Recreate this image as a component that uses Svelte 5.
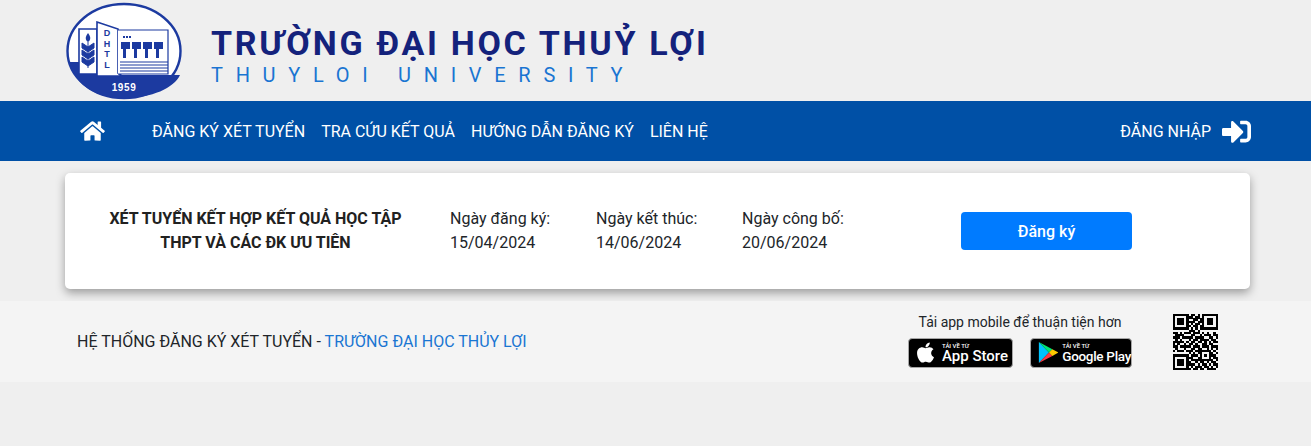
<script lang="ts">
  const qr = [
    "1111111 0 1 1 0 1 0 1111111",
    "1000001 1 1 0 1 1 0 1000001",
    "1011101 0 0 1 1 0 1 1011101",
    "1011101 1 1 1 0 1 1 1011101",
    "1011101 0 1 0 1 1 0 1011101",
    "1000001 1 0 1 1 0 1 1000001",
    "1111111 0 1 0 1 0 1 1111111",
    "0000000 1 1 1 0 1 0 0000000",
    "1101011 1 0 1 1 1 0 1010010",
    "0111100 0 1 1 0 0 1 0111011",
    "1110111 1 1 0 1 1 1 1001101",
    "0101000 1 0 1 1 0 1 1110110",
    "1111101 0 1 1 0 1 1 0101011",
    "1010010 1 1 0 1 0 0 1101100",
    "1101111 1 0 1 1 1 0 1110111",
    "0100010 0 1 1 0 1 1 0010101",
    "1011101 1 1 0 1 1 1 1111010",
    "0000000 1 0 1 0 1 1 0001101",
    "1111111 0 1 1 1 0 1 0101110",
    "1000001 1 1 0 0 1 1 0001011",
    "1011101 0 1 1 1 1 1 1111101",
    "1011101 1 0 0 1 0 1 1010110",
    "1011101 1 1 1 0 1 0 1101011",
    "1000001 0 1 0 1 1 1 0110101",
    "1111111 1 0 1 1 0 1 1011110"
  ].map((r) => r.replaceAll(" ", ""));
  const cells = qr.flatMap((row, y) =>
    [...row].flatMap((c, x) => (c === "1" ? [{ x, y }] : []))
  );
  const links = ["ĐĂNG KÝ XÉT TUYỂN", "TRA CỨU KẾT QUẢ", "HƯỚNG DẪN ĐĂNG KÝ", "LIÊN HỆ"];
  const dates = [
    ["Ngày đăng ký:", "15/04/2024"],
    ["Ngày kết thúc:", "14/06/2024"],
    ["Ngày công bố:", "20/06/2024"]
  ];
</script>

<div class="page">
  <header class="brand">
    <svg class="logo" viewBox="0 0 116 98" width="116" height="98">
      <ellipse cx="58" cy="49" rx="56.5" ry="47" fill="#fff" stroke="#1c3aa0" stroke-width="2.4" />
      <path d="M3 60H43L52 73H114C108 86 86 96 58 96S10 84 3 60Z" fill="#1c3aa0" />
      <path d="M13 27H31V72H13Z" fill="#fff" stroke="#1c3aa0" stroke-width="1.6" />
      <path d="M31 20L52 27V71L56 74H31Z" fill="#fff" stroke="#1c3aa0" stroke-width="1.6" />
      <path d="M52 28H102V72H52" fill="#fff" stroke="#1c3aa0" stroke-width="1.2" />
      <path d="M22 31C25 35 25 38 22 40C19 38 19 35 22 31Z" fill="#1c3aa0" />
      <path d="M22 40V66M22 45L16 41V46L22 50L28 46V41ZM22 52L16 48V53L22 57L28 53V48ZM22 59L16 55V60L22 64L28 60V55Z" fill="#1c3aa0" stroke="#1c3aa0" stroke-width="1" />
      <g fill="#1c3aa0" font-family="'Liberation Sans', sans-serif" font-weight="700" font-size="9" text-anchor="middle">
        <text x="41" y="34">D</text>
        <text x="41" y="45">H</text>
        <text x="41" y="55">T</text>
        <text x="41" y="66">L</text>
      </g>
      <path d="M57 35H65" stroke="#1c3aa0" stroke-width="2" stroke-dasharray="2 1" />
      <g fill="#1c3aa0">
        <path d="M55 40H64V47H60V56H57V47H55Z" />
        <path d="M66 40H75V47H71V56H68V47H66Z" />
        <path d="M77 40H86V47H82V56H79V47H77Z" />
        <path d="M88 40H97V47H93V56H90V47H88Z" />
      </g>
      <path d="M54 60H102M54 63H102M54 66H102M54 69H102" stroke="#1c3aa0" stroke-width="1.2" />
      <text x="58" y="89" fill="#fff" font-family="'Liberation Sans', sans-serif" font-weight="700" font-size="10" letter-spacing="0.6" text-anchor="middle">1959</text>
    </svg>
    <div class="title">
      <div class="vn">TRƯỜNG ĐẠI HỌC THUỶ LỢI</div>
      <div class="en">THUYLOI UNIVERSITY</div>
    </div>
  </header>

  <nav class="nav">
    <svg class="home" viewBox="0 0 576 512" width="25" height="22">
      <path fill="#fff" d="M280.4 148.3 96 300.1V464a16 16 0 0 0 16 16l112-.3a16 16 0 0 0 15.9-16V368a16 16 0 0 1 16-16h64a16 16 0 0 1 16 16v95.6a16 16 0 0 0 16 16.1l112 .3a16 16 0 0 0 16-16V300L295.7 148.3a12.2 12.2 0 0 0-15.3 0zM571.6 251.5 488 182.6V44.1a12 12 0 0 0-12-12h-56a12 12 0 0 0-12 12v72.6L318.5 43a48 48 0 0 0-61 0L4.3 251.5a12 12 0 0 0-1.6 16.9l25.5 31A12 12 0 0 0 45.2 301l235.2-193.7a12.2 12.2 0 0 1 15.3 0L530.9 301a12 12 0 0 0 16.9-1.6l25.5-31a12 12 0 0 0-1.7-17z" />
    </svg>
    <div class="links">
      {#each links as link}
        <span>{link}</span>
      {/each}
    </div>
    <div class="login">
      <span>ĐĂNG NHẬP</span>
      <svg viewBox="0 0 512 512" width="29" height="29">
        <path fill="#fff" d="M416 448h-84c-6.600 0-12-5.400-12-12v-40c0-6.600 5.400-12 12-12h84c17.700 0 32-14.300 32-32V160c0-17.700-14.300-32-32-32h-84c-6.600 0-12-5.400-12-12V76c0-6.600 5.400-12 12-12h84c53 0 96 43 96 96v192c0 53-43 96-96 96zm-47-201L201 79c-15-15-41-4.500-41 17v96H24c-13.300 0-24 10.700-24 24v96c0 13.300 10.700 24 24 24h136v96c0 21.500 26 32 41 17l168-168c9.300-9.400 9.300-24.600 0-34z" />
      </svg>
    </div>
  </nav>

  <main class="card">
    <div class="name">XÉT TUYỂN KẾT HỢP KẾT QUẢ HỌC TẬP<br />THPT VÀ CÁC ĐK ƯU TIÊN</div>
    <div class="dates">
      {#each dates as d}
        <div class="date">
          <div>{d[0]}</div>
          <div>{d[1]}</div>
        </div>
      {/each}
    </div>
    <button class="register">Đăng ký</button>
  </main>

  <footer class="foot">
    <div class="copy">HỆ THỐNG ĐĂNG KÝ XÉT TUYỂN - <span class="school">TRƯỜNG ĐẠI HỌC THỦY LỢI</span></div>
    <div class="apps">
      <div class="hint">Tải app mobile để thuận tiện hơn</div>
      <div class="badges">
        <div class="badge apple">
          <svg viewBox="0 0 384 512" width="19" height="23">
            <path fill="#fff" d="M318.700 268.700c-.2-36.700 16.400-64.400 50-84.800-18.800-26.900-47.200-41.700-84.700-44.600-35.500-2.800-74.300 20.700-88.500 20.700-15 0-49.400-19.700-76.400-19.700C63.300 141.200 4 184.800 4 273.500q0 39.300 14.400 81.200c12.800 36.700 59 126.700 107.200 125.200 25.200-.6 43-17.900 75.800-17.900 31.800 0 48.300 17.900 76.400 17.900 48.600-.7 90.400-82.500 102.600-119.300-65.200-30.700-61.700-90-61.700-91.900zm-56.600-164.200c27.300-32.400 24.800-61.900 24-72.500-24.100 1.400-52 16.400-67.900 34.900-17.500 19.800-27.800 44.300-25.600 71.900 26.100 2 49.900-11.400 69.500-34.300z" />
          </svg>
          <div class="badge-text">
            <small>TẢI VỀ TỪ</small>
            <b>App Store</b>
          </div>
        </div>
        <div class="badge google">
          <svg viewBox="0 0 24 27" width="24" height="27">
            <path fill="#00c3ff" d="M1 1V26L13 13.500Z" />
            <path fill="#00e676" d="M1 1L17 9.500L13 13.500Z" />
            <path fill="#ff3a44" d="M1 26L17 17.500L13 13.500Z" />
            <path fill="#ffc900" d="M17 9.500L24 13.500L17 17.500L13 13.500Z" />
          </svg>
          <div class="badge-text">
            <small>TẢI VỀ TỪ</small>
            <b class="gp">Google Play</b>
          </div>
        </div>
      </div>
    </div>
    <svg class="qr" viewBox="0 0 25 25" width="56" height="56" shape-rendering="crispEdges">
      {#each cells as c}
        <rect x={c.x} y={c.y} width="1.02" height="1.02" fill="#000" />
      {/each}
    </svg>
  </footer>
</div>

<style>
  :global(body) {
    margin: 0;
    background: #efefef;
    font-family: Roboto, "Liberation Sans", sans-serif;
  }

  .page {
    height: 446px;
    color: #212529;
  }

  .brand {
    height: 101px;
    box-sizing: border-box;
    padding: 2px 0 0 66px;
    display: flex;
    gap: 29px;
    align-items: flex-start;
  }
  .title {
    padding-top: 21px;
    white-space: nowrap;
  }
  .vn {
    font-size: 34px;
    font-weight: 700;
    line-height: 40px;
    letter-spacing: 2.7px;
    color: #14227c;
  }
  .en {
    font-size: 20px;
    line-height: 24px;
    letter-spacing: 12.7px;
    color: #1a75d2;
    margin-top: 0;
  }

  .nav {
    height: 60px;
    background: #0050a6;
    color: #fff;
    display: flex;
    align-items: center;
    padding: 0 60px 0 80px;
    font-size: 16px;
  }
  .home {
    flex-shrink: 0;
  }
  .links {
    display: flex;
    gap: 16px;
    margin-left: 47px;
  }
  .login {
    margin-left: auto;
    display: flex;
    align-items: center;
    gap: 11px;
  }

  .card {
    margin: 12px 61px 12px 65px;
    height: 116px;
    background: #fff;
    border-radius: 5px;
    box-shadow: 0 4px 10px rgba(0, 0, 0, 0.35);
    display: flex;
    align-items: center;
    font-size: 16px;
    line-height: 24px;
  }
  .name {
    width: 381px;
    flex-shrink: 0;
    text-align: center;
    font-weight: 700;
    color: #212121;
  }
  .dates {
    display: flex;
    margin-left: 4px;
  }
  .date {
    width: 146px;
  }
  .register {
    margin-left: 73px;
    width: 171px;
    height: 38px;
    border: 0;
    border-radius: 4px;
    background: #007bff;
    color: #fff;
    font: 500 16px Roboto, sans-serif;
  }

  .foot {
    height: 81px;
    background: #f4f4f4;
    display: flex;
    align-items: center;
    padding: 0 82px 0 77px;
  }
  .copy {
    font-size: 16px;
    margin-right: auto;
  }
  .school {
    color: #1a76d2;
  }
  .apps {
    width: 224px;
    margin-right: 41px;
    margin-top: -4px;
  }
  .hint {
    font-size: 14px;
    line-height: 20px;
    text-align: center;
    margin-bottom: 6px;
  }
  .badges {
    display: flex;
    gap: 17px;
    justify-content: center;
  }
  .badge {
    width: 105px;
    height: 30px;
    box-sizing: border-box;
    background: #000;
    border: 1px solid #a6a6a6;
    border-radius: 4px;
    color: #fff;
    display: flex;
    align-items: center;
    gap: 7px;
    padding-left: 7px;
  }
  .google {
    width: 102px;
    gap: 4px;
  }
  .badge-text {
    display: flex;
    flex-direction: column;
  }
  .badge-text small {
    font-size: 6px;
    line-height: 7px;
    font-weight: 500;
  }
  .badge-text b {
    font-size: 15px;
    line-height: 15px;
    font-weight: 500;
    white-space: nowrap;
  }
  .badge-text b.gp {
    font-size: 13.500px;
    letter-spacing: -0.3px;
  }
  .qr {
    flex-shrink: 0;
  }
</style>
